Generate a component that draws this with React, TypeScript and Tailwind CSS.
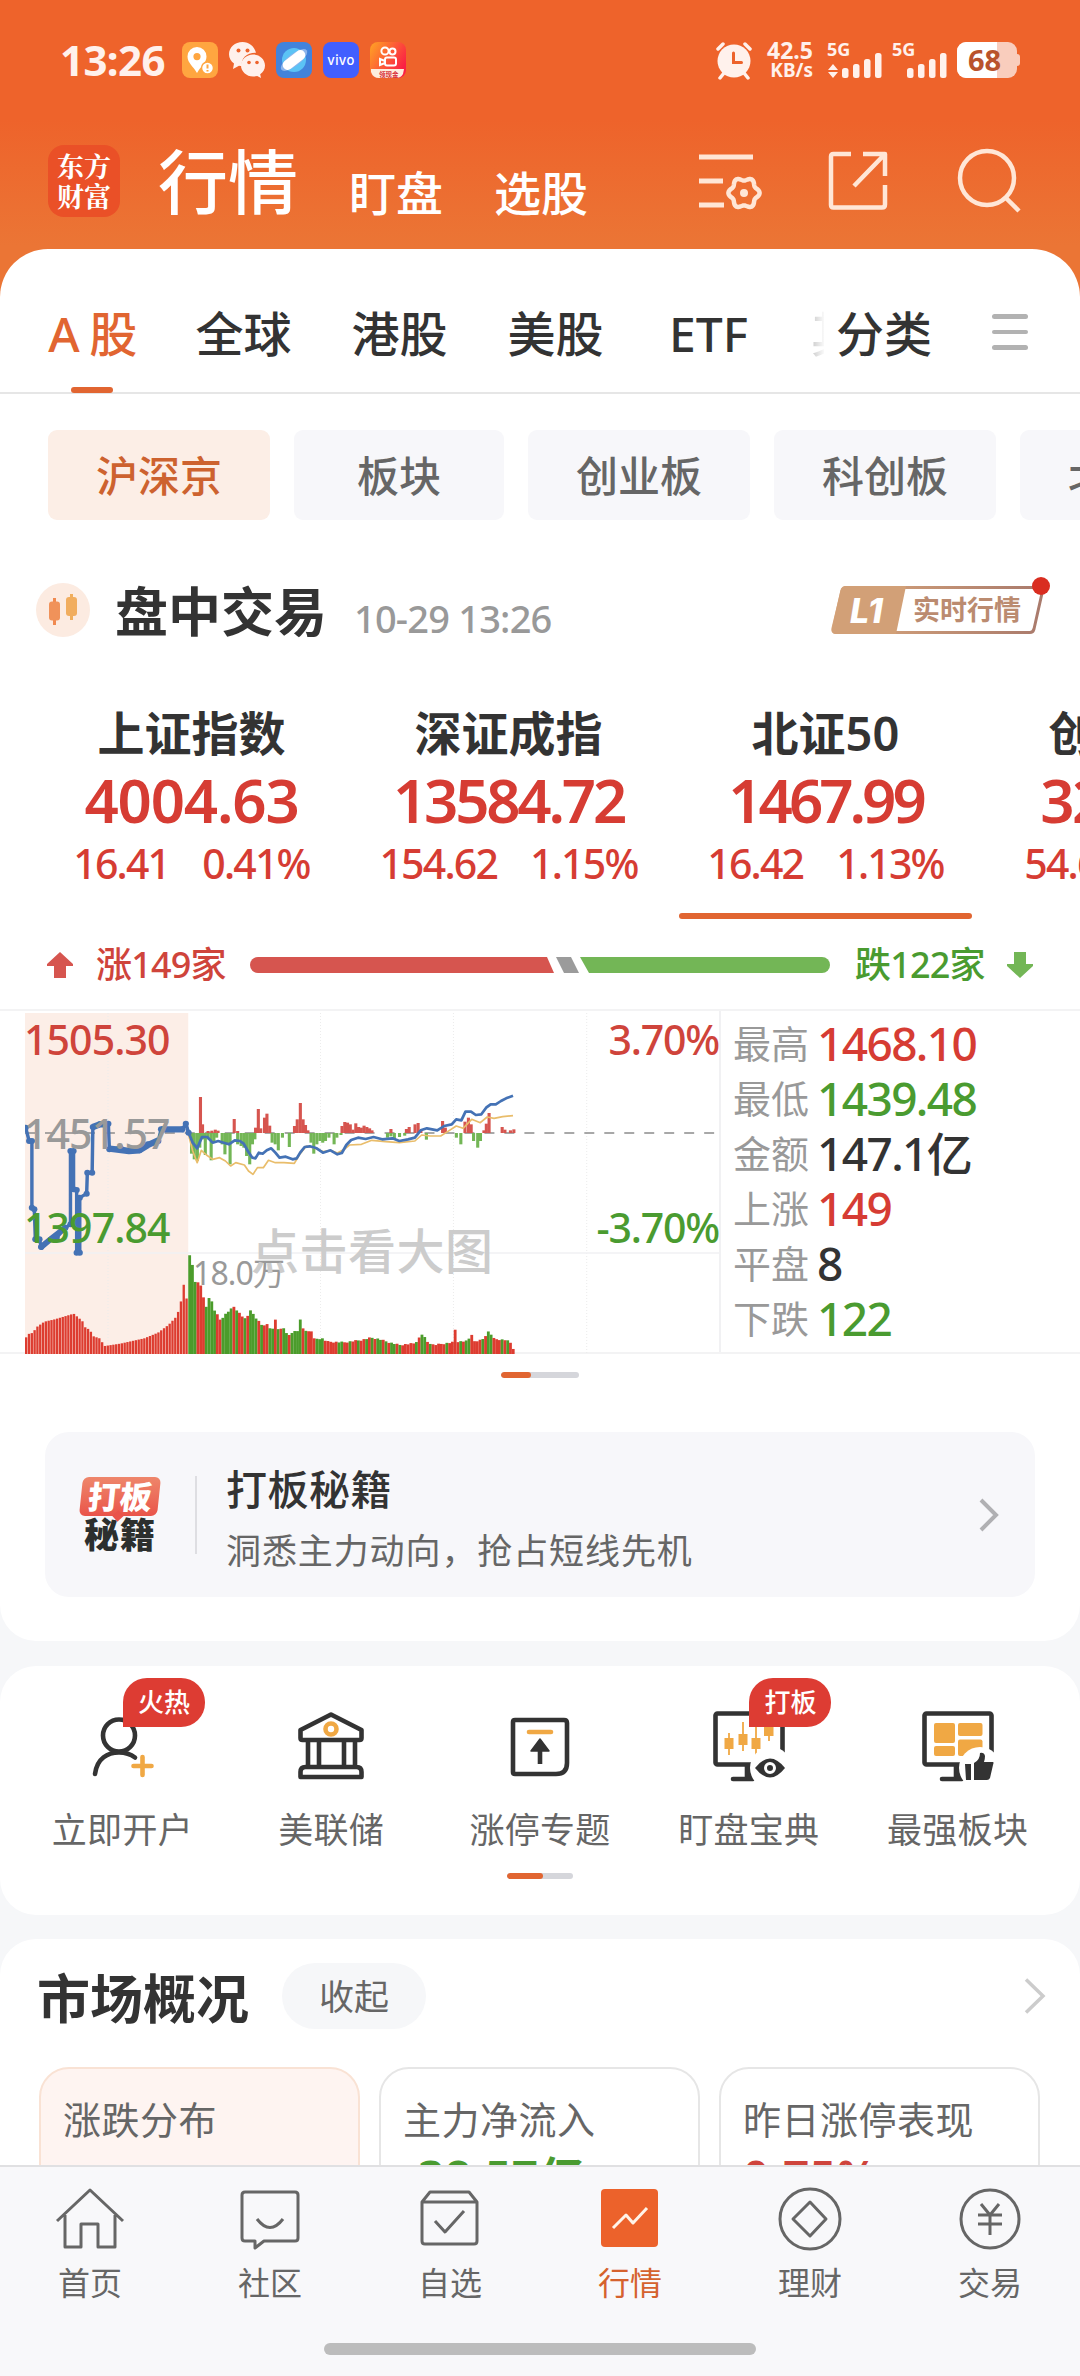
import type { ReactNode } from "react";

const INK = "#333333";
const GOLD = "#f0a844";

const marketTabs = ["A 股", "全球", "港股", "美股", "ETF"];

const boards = [
  { name: "沪深京", width: "w-[222px]", active: true },
  { name: "板块", width: "w-[210px]" },
  { name: "创业板", width: "w-[222px]" },
  { name: "科创板", width: "w-[222px]" },
  { name: "北交所", width: "w-[222px]" },
];

const indices = [
  { name: "上证指数", value: "4004.63", change: "16.41", pct: "0.41%", tracking: "tracking-[-1.2px]" },
  { name: "深证成指", value: "13584.72", change: "154.62", pct: "1.15%", tracking: "tracking-[-3.2px]" },
  { name: "北证50", value: "1467.99", change: "16.42", pct: "1.13%", tracking: "tracking-[-4px]", active: true },
  { name: "创业板指", value: "3284.17", change: "54.63", pct: "1.69%", tracking: "tracking-[-2.6px]" },
];

const stats = [
  { label: "最高", value: "1468.10", color: "text-[#d63c33]" },
  { label: "最低", value: "1439.48", color: "text-[#4a9b30]" },
  { label: "金额", value: "147.1亿", color: "text-[#333]" },
  { label: "上涨", value: "149", color: "text-[#d63c33]" },
  { label: "平盘", value: "8", color: "text-[#333]" },
  { label: "下跌", value: "122", color: "text-[#4a9b30]" },
];

type Point = [number, number];

// top edges of the volume bars, [x, y] in chart units
const preVolume: Point[] = [
  [75, 1045], [80, 1030], [98, 1025], [105, 1010], [130, 992], [160, 985], [215, 968], [240, 990], [250, 1012],
  [262, 1015], [270, 1035], [290, 1042], [305, 1065], [350, 1058], [420, 1042], [460, 1025], [490, 1002],
  [515, 975], [528, 925], [538, 858], [546, 968],
];
const volume: Point[] = [
  [550, 790], [558, 812], [565, 865], [572, 878], [580, 865], [590, 915], [597, 940], [603, 955], [608, 910],
  [614, 925], [620, 950], [640, 985], [660, 962], [680, 945], [700, 970], [715, 985], [727, 953], [740, 975],
  [760, 1000], [778, 998], [790, 1020], [801, 980], [809, 1015], [826, 1008], [835, 1035], [850, 1020],
  [864, 1018], [872, 985], [880, 1010], [895, 1020], [905, 1018], [912, 1042], [935, 1040], [950, 1050],
  [1000, 1052], [1050, 1045], [1078, 1038], [1100, 1042], [1130, 1052], [1160, 1060], [1205, 1055],
  [1227, 1026], [1240, 1050], [1260, 1060], [1315, 1052], [1323, 1008], [1330, 1050], [1360, 1048],
  [1368, 1020], [1376, 1050], [1400, 1045], [1420, 1018], [1435, 1042], [1470, 1045], [1485, 1055], [1495, 1082],
];
const volumeColors =
  "gggrrrggggrrggggrgrrgrgggrgrrggrgrggrggggrgrrrgggrrrrrggrrgrrgrrgrgrggrgrggrgrrrrrgrggrgrrrrrgrrrrgrggrrrrgrggrrrgrgrrr";

const forceUp: Point[] = [
  [582, 318], [588, 400], [604, 420], [615, 419], [625, 416], [633, 419], [680, 384], [690, 420], [742, 410],
  [750, 354], [757, 412], [768, 380], [775, 368], [783, 404], [855, 405], [863, 385], [872, 336], [880, 385],
  [887, 402], [894, 418], [993, 405], [1001, 393], [1009, 395], [1017, 400], [1025, 416], [1033, 397],
  [1041, 408], [1049, 410], [1057, 404], [1065, 408], [1073, 412], [1080, 418], [1135, 414], [1180, 414],
  [1188, 408], [1205, 400], [1214, 396], [1222, 418], [1285, 390], [1293, 410], [1350, 392], [1360, 380],
  [1368, 400], [1405, 418], [1412, 398], [1420, 366], [1458, 408], [1466, 416], [1482, 418], [1492, 415],
];
const forceDown: Point[] = [
  [556, 488], [564, 505], [573, 510], [580, 470], [588, 445], [596, 492], [604, 445], [613, 508], [621, 455],
  [629, 440], [645, 460], [653, 490], [660, 462], [668, 520], [690, 460], [700, 465], [708, 470], [716, 495],
  [725, 520], [733, 460], [740, 445], [790, 455], [799, 460], [808, 478], [820, 440], [840, 468], [903, 455],
  [911, 488], [920, 460], [929, 450], [937, 455], [945, 450], [955, 440], [970, 460], [978, 440], [990, 432],
  [1125, 440], [1135, 436], [1145, 445], [1160, 438], [1175, 434], [1238, 446], [1325, 440], [1338, 460],
  [1375, 450], [1387, 470], [1395, 450],
];

const auctionLine =
  "75,410 85,450 93,450 93,650 100,655 103,745 115,745 120,768 150,745 165,740 190,710 205,700 205,480 214,480 214,595 223,597 223,785 232,785 232,620 252,608 254,545 268,545 270,408 290,400 315,398 318,475 350,470 375,480 405,478 430,460 460,450 468,415 530,415 540,398 548,425";
const priceLine =
  "540,398 550,430 560,455 573,472 587,438 602,438 618,455 634,450 650,455 665,460 682,448 697,450 708,458 720,480 733,500 742,502 752,485 763,488 775,478 788,472 800,485 812,500 830,497 850,505 862,502 872,485 885,468 900,466 920,472 938,485 960,478 980,490 993,486 1006,462 1020,447 1040,440 1062,444 1085,438 1110,445 1140,442 1160,450 1185,445 1205,440 1222,418 1240,412 1270,418 1290,405 1312,400 1325,385 1340,388 1352,362 1368,362 1382,372 1398,370 1412,350 1425,340 1440,340 1455,330 1470,322 1490,314";
const averageLine =
  "540,400 550,440 560,480 573,515 585,478 600,492 618,505 638,500 655,510 670,525 685,515 710,522 722,540 735,550 748,530 765,530 780,508 800,515 825,515 855,517 872,488 890,465 910,470 940,482 960,478 980,486 1000,475 1015,462 1050,460 1080,448 1120,452 1160,455 1205,450 1225,432 1250,435 1280,435 1300,422 1325,405 1345,412 1370,385 1395,395 1415,378 1435,382 1460,377 1490,374";

// six-lobed outline of the settings gear
const gear = Array.from({ length: 72 }, (_, i) => {
  const a = (i * Math.PI) / 36;
  const r = 14 + 1.6 * Math.cos(6 * a);
  return `${(45 + r * Math.cos(a)).toFixed(2)},${(46 + r * Math.sin(a)).toFixed(2)}`;
}).join(" ");

function levelAt(points: Point[], x: number) {
  const i = points.findIndex((p) => p[0] >= x);
  if (i <= 0) return points[i === 0 ? 0 : points.length - 1][1];
  const [x0, y0] = points[i - 1];
  const [x1, y1] = points[i];
  return y0 + ((y1 - y0) * (x - x0)) / (x1 - x0);
}

function IntradayChart() {
  return (
    <svg viewBox="73 60 2018 1029" preserveAspectRatio="none" className="block h-[343px] w-[695px]">
      <rect x="73" y="66" width="474" height="1023" fill="#fceee7" />
      {[314, 931, 1317, 1704].map((x) => (
        <path key={x} d={`M${x} 66V1087`} stroke="#ececec" strokeWidth="3" strokeDasharray="3 6" />
      ))}
      <path d="M73 786H2091" stroke="#f1f1f3" strokeWidth="5" />
      <path d="M73 426H2091" stroke="#8c8c8c" strokeWidth="5" strokeDasharray="29 29" />
      {forceDown.map(([x, y]) => (
        <rect key={x} x={x - 4} y="426" width="9" height={y - 426} fill="#73b656" />
      ))}
      {forceUp.map(([x, y]) => (
        <rect key={x} x={x - 4} y={y} width="9" height={426 - y} fill="#d6554f" />
      ))}
      <polyline points={averageLine} fill="none" stroke="#e9bd6b" strokeWidth="5" strokeLinejoin="round" />
      <polyline points={priceLine} fill="none" stroke="#4472b5" strokeWidth="8" strokeLinejoin="round" />
      <polyline points={auctionLine} fill="none" stroke="#4472b5" strokeWidth="10" strokeLinejoin="round" />
      {auctionLine.split(" ").map((p) => {
        const [x, y] = p.split(",");
        return <circle key={p} cx={x} cy={y} r="9" fill="#4472b5" />;
      })}
      <path
        d="M270 408L290 400L312 400M318 473L375 480L405 478L430 462L460 448M468 415H535"
        fill="none"
        stroke="#4472b5"
        strokeWidth="19"
        strokeLinejoin="round"
      />
      <path d="M120 768L150 742L190 710" fill="none" stroke="#4472b5" strokeWidth="17" strokeLinecap="round" />
      {Array.from({ length: 58 }, (_, i) => {
        const x = 73 + i * 8.17;
        const y = levelAt(preVolume, x + 4);
        return <rect key={i} x={x} y={y} width="6.8" height={1089 - y} fill="#dd3c30" />;
      })}
      {Array.from({ length: 118 }, (_, i) => {
        const x = 547 + i * 8.03;
        const y = levelAt(volume, x + 4) + ((i * 7) % 5);
        const green = volumeColors[i] === "g";
        return <rect key={i} x={x} y={y} width="8.2" height={1089 - y} fill={green ? "#4b9c2b" : "#dd3c30"} />;
      })}
    </svg>
  );
}

interface StrokeProps {
  children: ReactNode;
  size?: string;
  box?: number;
  width?: number;
}

function Stroke({ children, size = "size-16", box = 64, width = 3 }: StrokeProps) {
  return (
    <svg
      viewBox={`0 0 ${box} ${box}`}
      className={`${size} overflow-visible`}
      fill="none"
      stroke="currentColor"
      strokeWidth={width}
      strokeLinejoin="round"
    >
      {children}
    </svg>
  );
}

function StatusBar() {
  return (
    <div className="flex h-[120px] items-center pl-[60px] pr-[60px] text-[#fff1ec]">
      <span className="w-[107px] whitespace-nowrap text-[42px] font-bold leading-none tracking-[-0.6px]">13:26</span>
      <div className="ml-[15px] flex gap-[11px]">
        <svg viewBox="0 0 36 36" className="size-9">
          <rect width="36" height="36" rx="8" fill="#ffa640" />
          <path
            d="M15 5a9.500 9.500 0 0 0-9.500 9.500c0 6.500 6 10 9.500 16.500 3.500-6.500 9.500-10 9.500-16.500A9.500 9.500 0 0 0 15 5Zm0 6a3.600 3.600 0 1 1 0 7.200 3.600 3.600 0 0 1 0-7.200Z"
            fill="#fff"
            fillRule="evenodd"
          />
          <circle cx="25.500" cy="26" r="6" fill="#fff" stroke="#ffa640" strokeWidth="1.500" />
          <path d="M25.500 22.500v4M25.500 28v1.500" stroke="#ffa640" strokeWidth="2" />
        </svg>
        <svg viewBox="0 0 36 36" className="size-9" fill="#fff1ec">
          <path d="M13.500 0C6 0 0 5.400 0 12.200c0 4 2 7.200 5 9.300L4 27l6-3.200c1 .2 2 .3 3 .3C11.500 16 18 10.500 27 10.800 25.500 4.500 20 0 13.500 0Z" />
          <path d="M36 23.500c0-6-5.500-11-12-11s-12 5-12 11 5.500 11 12 11c1.500 0 3-.2 4.200-.6L32 36l-.8-3.800c3-2 4.800-5 4.800-8.700Z" />
          <g fill="#ed632c">
            <circle cx="9.500" cy="8.500" r="2" />
            <circle cx="18.500" cy="8.500" r="2" />
            <circle cx="20" cy="20.500" r="1.800" />
            <circle cx="28" cy="20.500" r="1.800" />
          </g>
        </svg>
        <svg viewBox="0 0 36 36" className="size-9">
          <rect width="36" height="36" rx="8" fill="#4283dc" />
          <circle cx="18" cy="18" r="12" fill="#5bc3f5" />
          <ellipse cx="18" cy="18" rx="16" ry="6" fill="#8db5ec" transform="rotate(-38 18 18)" />
          <rect x="5" y="13" width="26" height="10" rx="5" fill="#fff" transform="rotate(-38 18 18)" />
        </svg>
        <span className="flex size-9 items-center justify-center rounded-lg bg-[#415fff] font-['Inter',sans-serif] text-[13px] font-medium leading-none tracking-[0.4px] text-white">
          vivo
        </span>
        <svg viewBox="0 0 36 36" className="size-9">
          <defs>
            <linearGradient id="clip" x1="0" y1="0" x2="1" y2=".6">
              <stop offset="0" stopColor="#ffa524" />
              <stop offset="1" stopColor="#fb1f45" />
            </linearGradient>
          </defs>
          <rect width="36" height="36" rx="8" fill="url(#clip)" />
          <path d="M1 27h33l-1 5q-2 4-7 4H9q-6 0-8-6Z" fill="#fdeedd" />
          <g fill="none" stroke="#fff" strokeWidth="2">
            <circle cx="15" cy="9" r="3.600" />
            <circle cx="22.500" cy="9.500" r="3" />
            <rect x="15" y="15.500" width="11" height="8" rx="2" />
            <path d="m15 19-5-2v6l5-2" />
          </g>
          <text x="9" y="34.500" fontSize="6.500" fontWeight="700" fill="#d8303a">领现金</text>
        </svg>
      </div>
      <div className="ml-auto flex items-center">
        <svg viewBox="0 0 36 38" className="mt-0.5 h-[38px] w-9" fill="none" stroke="#fff1ec" strokeWidth="3.500" strokeLinecap="round">
          <circle cx="18" cy="19" r="16.500" fill="#fff1ec" stroke="none" />
          <path d="M2 7l5-5M34 7l-5-5M4 36l4-5M32 36l-4-5" />
          <path d="M17.500 11v9.500h8" stroke="#ed632c" strokeWidth="3" />
        </svg>
        <div className="ml-[13px] flex w-[48px] flex-col items-end whitespace-nowrap font-bold">
          <span className="text-[23px] leading-[20px]">42.5</span>
          <span className="text-[19px] leading-[20px]">KB/s</span>
        </div>
        <Signal data className="ml-[11px]" />
        <Signal className="ml-[5px]" />
        <div className="relative ml-2 flex h-9 w-[60px] items-center overflow-hidden rounded-[9px] bg-[#f9cdbd]">
          <div className="h-full w-10 bg-white" />
          <span className="absolute left-[11px] text-[29px] font-bold leading-9 text-[#b9532c]">68</span>
        </div>
        <div className="h-3 w-[3px] rounded-r-sm bg-[#f9cdbd]" />
      </div>
    </div>
  );
}

function Signal({ data, className }: { data?: boolean; className: string }) {
  return (
    <svg viewBox="0 0 60 38" className={`h-[38px] w-[60px] ${className}`} fill="#fff1ec">
      <text x="3" y="15" fontSize="18" fontWeight="700">5G</text>
      {data && <path d="M9 23l5 6H4ZM9 37l-5-6h10Z" />}
      <rect x="18" y="27" width="6.500" height="10" rx="2.500" />
      <rect x="29" y="23" width="6.500" height="14" rx="2.500" />
      <rect x="40" y="18" width="6.500" height="19" rx="2.500" />
      <rect x="51" y="12" width="6.500" height="25" rx="2.500" />
    </svg>
  );
}

function Header() {
  return (
    <header className="flex h-[129px] text-white">
      <div className="ml-12 mt-[25px] flex h-[72px] w-[72px] flex-col items-center justify-center rounded-2xl bg-[#ea5027] font-['Noto_Serif_CJK_SC','Noto_Sans_CJK_SC',serif] text-[27px] font-bold leading-[30px]">
        <span>东方</span>
        <span>财富</span>
      </div>
      <h1 className="ml-[38px] mt-[22px] text-[70px] font-medium leading-[80px]">行情</h1>
      <span className="ml-[51px] mt-[43px] text-[47px] font-medium leading-[60px]">盯盘</span>
      <span className="ml-[51px] mt-[43px] text-[47px] font-medium leading-[60px]">选股</span>
      <div className="ml-auto mr-[57px] mt-[27px] flex gap-[66px] text-[#ffe6d6]">
        <Stroke width={4.5}>
          <path d="M0 10h54M0 34h24M0 58h25" strokeWidth="5" />
          <polygon points={gear} />
          <circle cx="45" cy="46" r="4" fill="currentColor" stroke="none" />
        </Stroke>
        <Stroke width={4.5}>
          <path d="M22 7H4.500Q2 7 2 9.500V58q0 2.500 2.500 2.500H53q3 0 3-3V38M34 7h22v22M56 7 25 39" />
        </Stroke>
        <Stroke width={4.5}>
          <circle cx="28" cy="31" r="27" />
          <path d="M46 50l14 14" />
        </Stroke>
      </div>
    </header>
  );
}

function tabClass(i: number) {
  if (i === 0) return "w-[86px] text-[#e16531]";
  return i === 4 ? "ml-[63px] w-[85px]" : "ml-[61px] w-[95px]";
}

function MarketPanel() {
  return (
    <section className="overflow-hidden rounded-[48px] rounded-b-[36px] bg-white pb-11">
      <nav className="flex h-[145px] items-start border-b-2 border-[#e6e6e6] pl-[49px] text-[48px] font-medium text-[#333]">
        {marketTabs.map((tab, i) => (
          <div key={tab} className={`flex h-[144px] flex-col items-center pt-[54px] ${tabClass(i)}`}>
            <span className={`whitespace-nowrap leading-[62px] ${i === 0 ? "tracking-[-1.5px]" : ""}`}>{tab}</span>
            {i === 0 && <span className="mt-[22px] h-[6px] w-[42px] rounded-full bg-[#e16531]" />}
          </div>
        ))}
        <div className="ml-[60px] mt-[54px] h-[62px] w-[13px] overflow-hidden">
          <span className="block w-12 bg-gradient-to-r from-[#c9c9c9] to-white to-30% bg-clip-text leading-[62px] text-transparent">其</span>
        </div>
        <span className="ml-[12px] mt-[54px] leading-[62px]">分类</span>
        <div className="ml-[60px] mt-[65px] flex w-9 flex-col gap-[11px]">
          <i className="h-[4.5px] rounded-full bg-[#b2b2b2]" />
          <i className="h-[4.5px] rounded-full bg-[#b2b2b2]" />
          <i className="h-[4.5px] rounded-full bg-[#b2b2b2]" />
        </div>
      </nav>

      <div className="mt-9 flex gap-6 pl-12">
        {boards.map((b) => (
          <div
            key={b.name}
            className={`flex h-[90px] shrink-0 items-center justify-center rounded-[9px] text-[42px] font-medium ${b.width} ${
              b.active ? "bg-[#fceee6] text-[#cd622f]" : "bg-[#f7f7fa] text-[#666]"
            }`}
          >
            {b.name}
          </div>
        ))}
      </div>

      <div className="mt-[63px] flex h-[54px] items-center pl-9 pr-9">
        <svg viewBox="0 0 54 54" className="size-[54px]">
          <circle cx="27" cy="27" r="27" fill="#fcebe1" />
          <path d="M18.500 15v27" stroke="#f0894f" strokeWidth="3" />
          <path d="M35.500 11v26" stroke="#f0ae5c" strokeWidth="3" />
          <rect x="13" y="18.500" width="11" height="19" rx="3" fill="#f0925a" />
          <rect x="30" y="14" width="11" height="19" rx="3" fill="#f1ad5e" />
        </svg>
        <h2 className="ml-[25px] mt-[3px] text-[53px] font-bold leading-[60px] text-[#333]">盘中交易</h2>
        <span className="ml-[27px] mt-4 whitespace-nowrap text-[38px] font-medium leading-10 tracking-[-0.8px] text-[#999]">10-29 13:26</span>
        <div className="relative ml-auto h-[48px] w-[213px]">
          <svg viewBox="0 0 213 48" className="absolute inset-0 h-12 w-[213px]">
            <defs>
              <linearGradient id="level" x1="0" x2="1">
                <stop offset="0" stopColor="#dba87c" />
                <stop offset="1" stopColor="#a97a6c" />
              </linearGradient>
            </defs>
            <path
              d="M16 1.500H209Q212 1.500 211.500 5L203 43Q202 46.500 199 46.500H5Q1 46.500 2 42L11 5Q12 1.500 16 1.500Z"
              fill="#fff"
              stroke="url(#level)"
              strokeWidth="3"
            />
            <path d="M14 0H75L65 48H5Q0 48 1 42L9.500 4Q11 0 14 0Z" fill="#d2a077" />
          </svg>
          <span className="absolute left-[19px] top-[5px] font-['Inter','Open_Sans',sans-serif] text-[34px] font-extrabold italic leading-[39px] text-white">
            L1
          </span>
          <span className="absolute left-[82px] top-0 whitespace-nowrap text-[27px] font-bold leading-[48px] text-[#bb8b70]">实时行情</span>
          <i className="absolute -right-[6px] -top-[9px] size-[18px] rounded-full bg-[#d92d20]" />
        </div>
      </div>

      <div className="mt-16 flex pl-[33px]">
        {indices.map((x) => (
          <div key={x.name} className="flex w-[317px] shrink-0 flex-col items-center whitespace-nowrap text-[#d63c33]">
            <span className="text-[47px] font-semibold leading-[65px] text-[#333]">{x.name}</span>
            <span className={`text-[60px] font-semibold leading-[69px] ${x.tracking}`}>{x.value}</span>
            <div className="flex gap-[33px] text-[41px] font-medium leading-[57px] tracking-[-1.8px]">
              <span>{x.change}</span>
              <span>{x.pct}</span>
            </div>
            <i className={`mt-[21px] h-[6px] w-[293px] rounded-full ${x.active ? "bg-[#e16531]" : ""}`} />
          </div>
        ))}
      </div>

      <div className="mt-[26px] flex h-10 items-center pl-[47px] pr-[47px] text-[36px] font-medium leading-10">
        <svg viewBox="0 0 26 26" className="size-[26px]" fill="#d6554f">
          <path d="M13 0 26 12v2h-7v12H7V14H0v-2Z" />
        </svg>
        <span className="ml-[23px] w-[154px] whitespace-nowrap tracking-[-0.8px] text-[#cf443b]">涨149家</span>
        <svg viewBox="0 0 580 16" className="h-4 w-[580px]">
          <path d="M8 0H297L304 16H8A8 8 0 0 1 8 0Z" fill="#d6554f" />
          <path d="M306 0H321L329 16H314Z" fill="#9b9b9b" />
          <path d="M330 0H572A8 8 0 0 1 572 16H339Z" fill="#73b656" />
        </svg>
        <span className="ml-[25px] w-[130px] whitespace-nowrap tracking-[-0.8px] text-[#4a9b30]">跌122家</span>
        <svg viewBox="0 0 26 26" className="ml-auto size-[26px]" fill="#73b656">
          <path d="M13 26 0 14v-2h7V0h12v12h7v2Z" />
        </svg>
      </div>

      <div className="mt-6 flex h-[345px] border-b-2 border-t-2 border-[#f3f3f4]">
        <div className="relative w-[721px] border-r-2 border-[#f1f1f3] pl-[25px] text-[41px] font-medium leading-10 tracking-[-0.9px]">
          <IntradayChart />
          <span className="absolute left-[193px] top-[242px] text-[32px] font-normal text-[#999]">18.0万</span>
          <span className="absolute left-[251px] top-[216px] whitespace-nowrap text-[48px] leading-[48px] tracking-[0.5px] text-[#ccc]">点击看大图</span>
          <span className="absolute left-6 top-[8px] text-[#cf443b]">1505.30</span>
          <span className="absolute left-6 top-[102px] text-[#999]">1451.57</span>
          <span className="absolute left-6 top-[196px] text-[#4a9b30]">1397.84</span>
          <span className="absolute right-0 top-[8px] tracking-[-1.2px] text-[#cf443b]">3.70%</span>
          <span className="absolute right-0 top-[196px] tracking-[-1.2px] text-[#4a9b30]">-3.70%</span>
        </div>
        <div className="flex flex-col pl-3 pt-[5px]">
          {stats.map((s) => (
            <div key={s.label} className="flex h-[55px] items-center leading-[55px]">
              <span className="w-[84px] text-[38px] text-[#999]">{s.label}</span>
              <span className={`text-[46px] font-medium tracking-[-1.6px] ${s.color}`}>{s.value}</span>
            </div>
          ))}
        </div>
      </div>
      <Pager className="mt-[18px] w-[78px]" bar="w-[30px]" />

      <div className="mx-[45px] mt-[54px] flex h-[165px] items-center rounded-3xl bg-[#f7f7fa] pl-[35px] pr-[36px]">
        <div className="flex w-20 flex-col items-center font-black">
          <div className="relative flex h-[39px] w-[78px] -skew-x-6 items-center justify-center rounded-md bg-gradient-to-b from-[#ee866b] to-[#e9534a] text-[32px] leading-[39px] text-white">
            打板
            <i className="absolute -bottom-[4px] left-[35px] size-2 rotate-45 bg-[#e9534a]" />
          </div>
          <span className="text-[35px] leading-[37px] tracking-[1px] text-[#2c2f2e]">秘籍</span>
        </div>
        <i className="ml-[35px] h-[78px] w-[2px] bg-[#dedee2]" />
        <div className="ml-[29px] flex flex-col whitespace-nowrap pt-[10px]">
          <span className="text-[41px] font-medium leading-[62px] tracking-[0.5px] text-[#333]">打板秘籍</span>
          <span className="text-[35px] leading-[62px] tracking-[0.9px] text-[#666]">洞悉主力动向，抢占短线先机</span>
        </div>
        <svg viewBox="0 0 20 34" className="ml-auto h-[34px] w-5 overflow-visible" fill="none" stroke="#b0b0b3" strokeWidth="4">
          <path d="M2 2 17 17 2 32" />
        </svg>
      </div>
    </section>
  );
}

function Pager({ className, bar }: { className: string; bar: string }) {
  return (
    <div className={`mx-auto h-[6px] overflow-hidden rounded-full bg-[#d5d6db] ${className}`}>
      <div className={`h-full rounded-full bg-[#e16531] ${bar}`} />
    </div>
  );
}

function Monitor({ children }: { children: ReactNode }) {
  return (
    <>
      <rect x="6.500" y="7.500" width="67" height="51" rx="2" />
      <path d="M24 73h20M38 60v12" strokeLinecap="round" />
      <path d="M36 60h10v14h-8Z" fill={INK} stroke="none" />
      {children}
    </>
  );
}

const tools = [
  {
    name: "立即开户",
    badge: "火热",
    icon: (
      <g strokeLinecap="round">
        <circle cx="37" cy="29.500" r="16" />
        <path d="M13 68C15 52 26 46.500 37 46.500c7 0 12 2 16 5" />
        <path d="M60.500 51v18M51.500 60h18" stroke={GOLD} />
      </g>
    ),
  },
  {
    name: "美联储",
    icon: (
      <>
        <path d="M9.500 24 40 8.500 70.500 24v8q0 2-2 2h-57q-2 0-2-2ZM17 34v27M28 34v27M53 34v27M64 34v27M9.500 71v-5q0-5 5-5h51q5 0 5 5v5Z" />
        <circle cx="40" cy="23" r="5.500" stroke={GOLD} />
      </>
    ),
  },
  {
    name: "涨停专题",
    icon: (
      <>
        <path d="M15 14H64q3 0 3 3V57q0 11-11 11H15q-2 0-2-2V16q0-2 2-2Z" />
        <path d="M29 26h22" stroke={GOLD} strokeLinecap="round" />
        <path d="M40 58V38" />
        <path d="M40 33 49 45H31Z" fill={INK} stroke={INK} strokeWidth="1.500" />
      </>
    ),
  },
  {
    name: "盯盘宝典",
    badge: "打板",
    icon: (
      <Monitor>
        <g stroke={GOLD} strokeWidth="1.800">
          <path d="M20 27v22M34 16v29M47 20v30M60 18v17" />
        </g>
        <g fill={GOLD} stroke="none">
          <path d="M15.500 32h9v11h-9ZM29.500 28h9v11h-9ZM42.500 32h9v11h-9ZM55 18h9.500v12H55Z" />
        </g>
        <circle cx="62" cy="62" r="21" fill="#fff" stroke="none" />
        <path d="M46 62q15-19 30 0q-15 19-30 0Z" fill={INK} stroke="none" />
        <circle cx="61" cy="62" r="4.500" stroke="#fff" strokeWidth="3" />
      </Monitor>
    ),
  },
  {
    name: "最强板块",
    icon: (
      <Monitor>
        <g fill={GOLD} stroke="none">
          <rect x="16" y="17" width="21" height="20" rx="2" />
          <rect x="40" y="17" width="24.500" height="13" rx="2" />
          <rect x="16" y="40" width="21" height="10" rx="2" />
          <rect x="40" y="33.500" width="24.500" height="16.500" rx="2" />
        </g>
        <circle cx="62" cy="62" r="21" fill="#fff" stroke="none" />
        <g fill={INK} stroke="none">
          <path d="M47 58h6v16h-5Z" />
          <path d="M56 57q6-3 6-10 4-1 5 3 0 3-1 6h9q1 0 0 3l-3 13q-1 2-3 2H56Z" />
        </g>
      </Monitor>
    ),
  },
];

function Tools() {
  return (
    <section className="mt-[25px] h-[249px] rounded-[36px] bg-white pt-10">
      <div className="flex px-[18px]">
        {tools.map((t) => (
          <div key={t.name} className="relative flex w-[209px] flex-col items-center text-[#333]">
            <Stroke size="size-20" box={80} width={4.6}>
              {t.icon}
            </Stroke>
            <span className="mt-[21px] text-[35px] leading-[46px] tracking-[0.3px] text-[#666]">{t.name}</span>
            {t.badge && (
              <span className="absolute -top-7 left-[105px] flex h-[49px] w-[82px] items-center justify-center rounded-[24px] rounded-bl-none bg-[#dd3c33] text-[26px] font-medium text-white">
                {t.badge}
              </span>
            )}
          </div>
        ))}
      </div>
      <Pager className="mt-[20px] w-[66px]" bar="w-9" />
    </section>
  );
}

const overviewCard = "h-[180px] w-[321px] rounded-[30px] border-2 pl-[22px] pt-[25px]";

function Overview() {
  return (
    <section className="mt-6 h-[300px] rounded-t-[36px] bg-white px-[39px] pt-6">
      <div className="flex h-[66px] items-center">
        <h2 className="-ml-[2px] mt-[6px] text-[53px] font-bold leading-[60px] text-[#333]">市场概况</h2>
        <span className="ml-[33px] flex h-[66px] w-[144px] items-center justify-center rounded-full bg-[#f6f7f9] pt-[2px] text-[35px] text-[#666]">
          收起
        </span>
        <svg viewBox="0 0 22 36" className="ml-auto mr-[-5px] h-9 w-[22px]" fill="none" stroke="#ccc" strokeWidth="3.500">
          <path d="M2 1.500 19 18 2 34.500" />
        </svg>
      </div>
      <div className="mt-[38px] flex gap-[19px] text-[38px] leading-[50px] tracking-[0.5px] text-[#666]">
        <div className={`border-[#f9e2d4] bg-[#fef4f1] ${overviewCard}`}>涨跌分布</div>
        <div className={`border-[#e6e6e6] ${overviewCard}`}>
          主力净流入
          <div className="mt-[3px] text-[46px] font-semibold leading-[60px] text-[#4a9b30]">-38.57亿</div>
        </div>
        <div className={`border-[#e6e6e6] ${overviewCard}`}>
          昨日涨停表现
          <div className="mt-[3px] text-[46px] font-semibold leading-[60px] text-[#cf443b]">0.75%</div>
        </div>
      </div>
    </section>
  );
}

const tabs = [
  { name: "首页", icon: <path d="M-1 34 32 3 65 34M7 28V60H23V37H40V60H57V28" /> },
  {
    name: "社区",
    icon: (
      <>
        <path d="M7 5H57q3 0 3 3V51q0 3-3 3H26L17 61V54H7q-3 0-3-3V8q0-3 3-3Z" />
        <path d="M19 32q13 17 26 0" />
      </>
    ),
  },
  {
    name: "自选",
    icon: <path d="M4 15 12 5H51L59 15V54q0 3-3 3H7q-3 0-3-3ZM4 15H59M17 34 27 45 46 24" />,
  },
  {
    name: "行情",
    active: true,
    icon: (
      <>
        <rect x="3" y="2" width="57" height="58" rx="4" fill="#ec622b" stroke="none" />
        <path d="M15 41 28 28 35 36 49 21" stroke="#fff3e8" />
      </>
    ),
  },
  {
    name: "理财",
    icon: (
      <>
        <circle cx="32" cy="32" r="30" />
        <path d="M32 15 48 32 32 49 15 32Z" />
      </>
    ),
  },
  {
    name: "交易",
    icon: (
      <>
        <circle cx="32" cy="32" r="29" />
        <path d="M23 17 32 28 41 17M20 28H44M20 37H44M32 28V48" />
      </>
    ),
  },
];

function TabBar() {
  return (
    <footer className="h-[211px] shrink-0 border-t-2 border-[#e0e0e2] bg-[#f8f8fa] pt-5">
      <div className="flex">
        {tabs.map((t) => (
          <div key={t.name} className={`flex w-[180px] flex-col items-center ${t.active ? "text-[#d5622e]" : "text-[#666]"}`}>
            <Stroke>{t.icon}</Stroke>
            <span className="mt-[12px] text-[32px] leading-10">{t.name}</span>
          </div>
        ))}
      </div>
      <div className="mx-auto mt-[40px] h-3 w-[432px] rounded-full bg-[#bcbcbc]" />
    </footer>
  );
}

export default function App() {
  return (
    <div className="flex h-[2376px] w-[1080px] flex-col overflow-hidden bg-[#f6f7f9] font-['Noto_Sans','Noto_Sans_CJK_SC',sans-serif]">
      <main className="min-h-0 flex-1 overflow-hidden bg-[linear-gradient(#ee632b_0px,#ee632b_120px,#eb7535_245px,#eb7535_310px,#f6f7f9_310px)]">
        <StatusBar />
        <Header />
        <MarketPanel />
        <Tools />
        <Overview />
      </main>
      <TabBar />
    </div>
  );
}
